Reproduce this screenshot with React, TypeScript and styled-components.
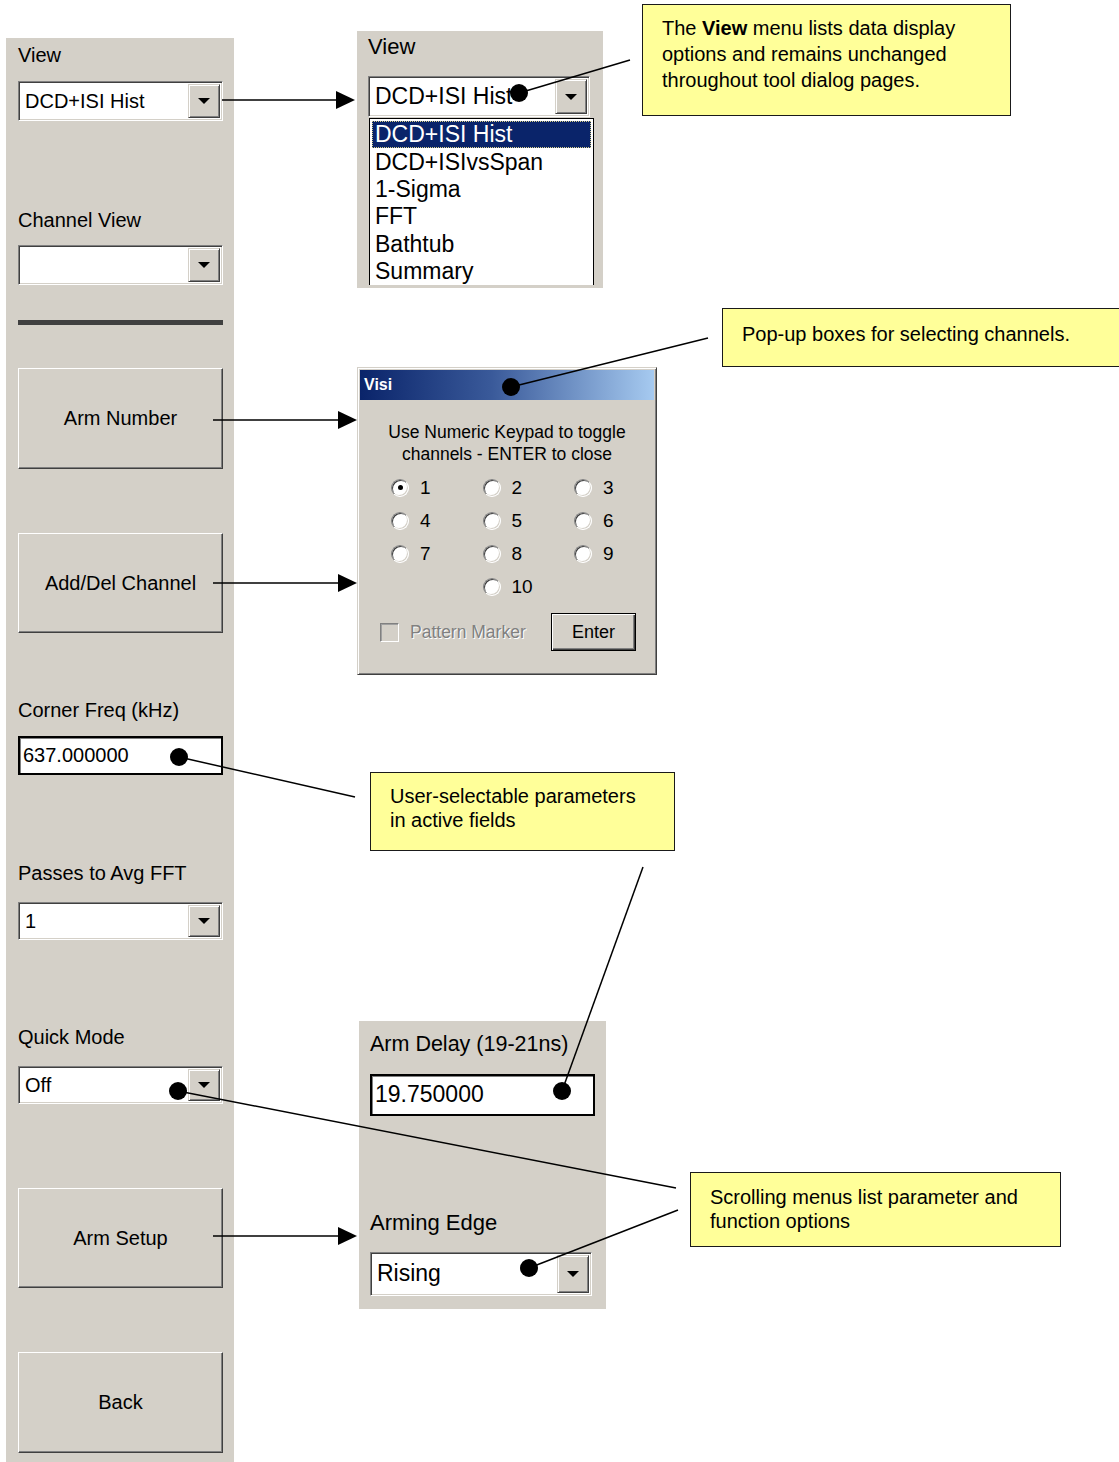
import React from "react";
import styled, { createGlobalStyle } from "styled-components";

const FACE = "#d4d0c8";

const GlobalStyle = createGlobalStyle`
  html, body { margin: 0; padding: 0; background: #ffffff; }
  body { font-family: "Liberation Sans", Arial, sans-serif; color: #000; }
`;

const Page = styled.div`
  position: relative;
  width: 1119px;
  height: 1462px;
  overflow: hidden;
  display: flex;
  align-items: flex-start;
  background: #ffffff;
`;

/* ---------- generic Win-classic parts ---------- */

const Label = styled.div<{ $mt: number; $size?: number }>`
  margin-top: ${(p) => p.$mt}px;
  font-size: ${(p) => p.$size ?? 20}px;
  line-height: ${(p) => (p.$size ?? 20) + 4}px;
  white-space: nowrap;
  color: #000;
`;

const Combo = styled.div<{ $mt: number; $h: number; $w?: number }>`
  margin-top: ${(p) => p.$mt}px;
  height: ${(p) => p.$h}px;
  width: ${(p) => (p.$w ? `${p.$w}px` : "auto")};
  box-sizing: border-box;
  display: flex;
  align-items: stretch;
  background: #ffffff;
  border: 1px solid;
  border-color: #808080 #ffffff #ffffff #808080;
  box-shadow: inset 1px 1px 0 #404040, inset -1px -1px 0 ${FACE};
  padding: 2px;
`;

const ComboValue = styled.span<{ $size: number }>`
  flex: 1;
  display: flex;
  align-items: center;
  padding-left: 4px;
  font-size: ${(p) => p.$size}px;
  white-space: nowrap;
  overflow: hidden;
`;

const DropButton = styled.span`
  width: 32px;
  flex-shrink: 0;
  box-sizing: border-box;
  background: ${FACE};
  border: 1px solid;
  border-color: ${FACE} #404040 #404040 ${FACE};
  box-shadow: inset 1px 1px 0 #ffffff, inset -1px -1px 0 #808080;
  display: flex;
  align-items: center;
  justify-content: center;
  &::after {
    content: "";
    border-left: 6px solid transparent;
    border-right: 6px solid transparent;
    border-top: 6px solid #000;
  }
`;

const TextField = styled.div<{ $mt: number; $h: number; $w?: number; $size: number }>`
  margin-top: ${(p) => p.$mt}px;
  height: ${(p) => p.$h}px;
  width: ${(p) => (p.$w ? `${p.$w}px` : "auto")};
  box-sizing: border-box;
  background: #ffffff;
  border: 2px solid #000;
  box-shadow: inset 1px 1px 0 #808080;
  display: flex;
  align-items: center;
  padding-left: 3px;
  font-size: ${(p) => p.$size}px;
  white-space: nowrap;
`;

const PanelButton = styled.div<{ $mt: number; $h: number }>`
  margin-top: ${(p) => p.$mt}px;
  height: ${(p) => p.$h}px;
  box-sizing: border-box;
  background: ${FACE};
  border: 1px solid;
  border-color: #ffffff #404040 #404040 #ffffff;
  box-shadow: inset -1px -1px 0 #808080;
  display: flex;
  align-items: center;
  justify-content: center;
  font-size: 20px;
  white-space: nowrap;
`;

const Separator = styled.div<{ $mt: number }>`
  margin-top: ${(p) => p.$mt}px;
  height: 5px;
  background: #404040;
`;

/* ---------- left tool panel ---------- */

const SidePanel = styled.aside`
  flex-shrink: 0;
  margin: 38px 0 0 6px;
  width: 228px;
  height: 1424px;
  box-sizing: border-box;
  padding: 0 11px 0 12px;
  background: ${FACE};
  display: flex;
  flex-direction: column;
`;

/* ---------- right canvas ---------- */

const Canvas = styled.div`
  flex: 1;
  display: flex;
  flex-direction: column;
`;

const Row = styled.div`
  display: flex;
  align-items: flex-start;
`;

const GreyPanel = styled.div<{ $ml: number; $mt: number; $w: number; $h: number }>`
  flex-shrink: 0;
  margin: ${(p) => p.$mt}px 0 0 ${(p) => p.$ml}px;
  width: ${(p) => p.$w}px;
  height: ${(p) => p.$h}px;
  box-sizing: border-box;
  padding-left: 11px;
  background: ${FACE};
  overflow: hidden;
  display: flex;
  flex-direction: column;
`;

const ListBox = styled.ul`
  margin: 1px 0 0 1px;
  padding: 2px 2px 0 2px;
  width: 225px;
  box-sizing: border-box;
  list-style: none;
  background: #ffffff;
  border: 1px solid #000;
  border-bottom: none;
`;

const ListItem = styled.li<{ $selected?: boolean }>`
  height: 27.4px;
  box-sizing: border-box;
  display: flex;
  align-items: center;
  padding-left: 3px;
  font-size: 23px;
  white-space: nowrap;
  color: ${(p) => (p.$selected ? "#ffffff" : "#000")};
  background: ${(p) => (p.$selected ? "#0a246a" : "transparent")};
  outline: ${(p) => (p.$selected ? "1px dotted #d8d08a" : "none")};
  outline-offset: -1px;
`;

const Callout = styled.div<{
  $ml: number;
  $mt: number;
  $w: number;
  $h: number;
  $pt: number;
  $pr?: number;
  $lh: number;
}>`
  flex-shrink: 0;
  margin: ${(p) => p.$mt}px 0 0 ${(p) => p.$ml}px;
  width: ${(p) => p.$w}px;
  height: ${(p) => p.$h}px;
  box-sizing: border-box;
  padding: ${(p) => p.$pt}px ${(p) => p.$pr ?? 12}px 0 19px;
  background: #ffff99;
  border: 1px solid #1a1a1a;
  font-size: 20px;
  line-height: ${(p) => p.$lh}px;
  color: #000;
`;

const Strong = styled.strong`
  font-weight: bold;
`;

/* ---------- Visi dialog ---------- */

const Dialog = styled.div`
  flex-shrink: 0;
  margin: 79px 0 0 123px;
  width: 300px;
  height: 308px;
  box-sizing: border-box;
  background: ${FACE};
  border: 1px solid;
  border-color: ${FACE} #404040 #404040 ${FACE};
  box-shadow: inset 1px 1px 0 #ffffff, inset -1px -1px 0 #808080;
  padding: 2px;
  display: flex;
  flex-direction: column;
`;

const TitleBar = styled.div`
  height: 30px;
  display: flex;
  align-items: center;
  padding-left: 4px;
  background: linear-gradient(to right, #0a246a 0%, #3a5a9a 45%, #a6caf0 100%);
  color: #ffffff;
  font-weight: bold;
  font-size: 16px;
`;

const DialogText = styled.div`
  margin-top: 21px;
  text-align: center;
  font-size: 17.5px;
  line-height: 22px;
`;

const RadioGrid = styled.div`
  margin-top: 6px;
  padding-left: 31px;
  display: grid;
  grid-template-columns: 91.5px 91.5px 91.5px;
  grid-auto-rows: 33px;
`;

const RadioOption = styled.label<{ $col?: number }>`
  grid-column: ${(p) => p.$col ?? "auto"};
  display: flex;
  align-items: center;
  gap: 11px;
  font-size: 19px;
`;

const RadioCircle = styled.span<{ $checked?: boolean }>`
  width: 18px;
  height: 18px;
  box-sizing: border-box;
  border-radius: 50%;
  background: #ffffff;
  border: 1px solid;
  border-color: #808080 #ffffff #ffffff #808080;
  box-shadow: inset 1px 1px 0 #404040, inset -1px -1px 0 ${FACE};
  display: flex;
  align-items: center;
  justify-content: center;
  &::after {
    content: "";
    width: 5px;
    height: 5px;
    border-radius: 50%;
    background: ${(p) => (p.$checked ? "#000" : "transparent")};
  }
`;

const DialogFooter = styled.div`
  margin-top: 10px;
  padding: 0 18px 0 20px;
  display: flex;
  align-items: center;
  justify-content: space-between;
`;

const CheckRow = styled.div`
  display: flex;
  align-items: center;
  gap: 11px;
  font-size: 17.5px;
  color: #808080;
  text-shadow: 1px 1px 0 #ffffff;
`;

const CheckBox = styled.span`
  width: 19px;
  height: 19px;
  box-sizing: border-box;
  background: ${FACE};
  border: 1px solid;
  border-color: #808080 #ffffff #ffffff #808080;
  box-shadow: inset 1px 1px 0 #a0a0a0;
`;

const DefaultButton = styled.div`
  width: 85px;
  height: 38px;
  box-sizing: border-box;
  border: 1px solid #000;
  background: ${FACE};
  box-shadow: inset 1px 1px 0 #ffffff, inset -1px -1px 0 #404040, inset -2px -2px 0 #808080;
  display: flex;
  align-items: center;
  justify-content: center;
  font-size: 18px;
`;

/* ---------- annotation overlay ---------- */

const Overlay = styled.svg`
  position: absolute;
  left: 0;
  top: 0;
  pointer-events: none;
`;

const arrows = [
  { x1: 222, x2: 355, y: 100 },
  { x1: 213, x2: 357, y: 420 },
  { x1: 213, x2: 357, y: 583 },
  { x1: 213, x2: 357, y: 1236 },
];

const pointers = [
  { cx: 519, cy: 93, x: 630, y: 60 },
  { cx: 511, cy: 387, x: 708, y: 338 },
  { cx: 179, cy: 757, x: 355, y: 797 },
  { cx: 562, cy: 1091, x: 643, y: 867 },
  { cx: 178, cy: 1091, x: 676, y: 1188 },
  { cx: 529, cy: 1268, x: 678, y: 1210 },
];

const viewItems = ["DCD+ISI Hist", "DCD+ISIvsSpan", "1-Sigma", "FFT", "Bathtub", "Summary"];

export default function App() {
  return (
    <>
      <GlobalStyle />
      <Page>
        <SidePanel>
          <Label $mt={5}>View</Label>
          <Combo $mt={14} $h={40}>
            <ComboValue $size={20}>DCD+ISI Hist</ComboValue>
            <DropButton />
          </Combo>
          <Label $mt={87}>Channel View</Label>
          <Combo $mt={13} $h={40}>
            <ComboValue $size={20} />
            <DropButton />
          </Combo>
          <Separator $mt={35} />
          <PanelButton $mt={43} $h={101}>Arm Number</PanelButton>
          <PanelButton $mt={64} $h={100}>Add/Del Channel</PanelButton>
          <Label $mt={65}>Corner Freq (kHz)</Label>
          <TextField $mt={14} $h={39} $size={20}>637.000000</TextField>
          <Label $mt={86}>Passes to Avg FFT</Label>
          <Combo $mt={17} $h={38}>
            <ComboValue $size={20}>1</ComboValue>
            <DropButton />
          </Combo>
          <Label $mt={85}>Quick Mode</Label>
          <Combo $mt={17} $h={38}>
            <ComboValue $size={20}>Off</ComboValue>
            <DropButton />
          </Combo>
          <PanelButton $mt={84} $h={100}>Arm Setup</PanelButton>
          <PanelButton $mt={64} $h={101}>Back</PanelButton>
        </SidePanel>

        <Canvas>
          <Row>
            <GreyPanel $ml={123} $mt={31} $w={246} $h={257}>
              <Label $mt={3} $size={22}>View</Label>
              <Combo $mt={16} $h={41} $w={222}>
                <ComboValue $size={23}>DCD+ISI Hist</ComboValue>
                <DropButton />
              </Combo>
              <ListBox>
                {viewItems.map((item, i) => (
                  <ListItem key={item} $selected={i === 0}>
                    {item}
                  </ListItem>
                ))}
              </ListBox>
            </GreyPanel>
            <Callout $ml={39} $mt={4} $w={369} $h={112} $pt={10} $lh={26}>
              The <Strong>View</Strong> menu lists data display options and remains
              unchanged throughout tool dialog pages.
            </Callout>
          </Row>

          <Row>
            <Dialog>
              <TitleBar>Visi</TitleBar>
              <DialogText>
                Use Numeric Keypad to toggle
                <br />
                channels - ENTER to close
              </DialogText>
              <RadioGrid>
                {[1, 2, 3, 4, 5, 6, 7, 8, 9].map((n) => (
                  <RadioOption key={n}>
                    <RadioCircle $checked={n === 1} />
                    {n}
                  </RadioOption>
                ))}
                <RadioOption $col={2}>
                  <RadioCircle />
                  10
                </RadioOption>
              </RadioGrid>
              <DialogFooter>
                <CheckRow>
                  <CheckBox />
                  Pattern Marker
                </CheckRow>
                <DefaultButton>Enter</DefaultButton>
              </DialogFooter>
            </Dialog>
            <Callout $ml={65} $mt={20} $w={420} $h={59} $pt={12} $lh={26}>
              Pop-up boxes for selecting channels.
            </Callout>
          </Row>

          <Row>
            <Callout $ml={136} $mt={97} $w={305} $h={79} $pt={11} $pr={30} $lh={24}>
              User-selectable parameters in active fields
            </Callout>
          </Row>

          <Row>
            <GreyPanel $ml={125} $mt={170} $w={247} $h={288}>
              <Label $mt={11} $size={21.5}>Arm Delay (19-21ns)</Label>
              <TextField $mt={16} $h={42} $w={225} $size={23}>19.750000</TextField>
              <Label $mt={94} $size={22}>Arming Edge</Label>
              <Combo $mt={16} $h={44} $w={222}>
                <ComboValue $size={23}>Rising</ComboValue>
                <DropButton />
              </Combo>
            </GreyPanel>
            <Callout $ml={84} $mt={321} $w={371} $h={75} $pt={12} $lh={24}>
              Scrolling menus list parameter and function options
            </Callout>
          </Row>
        </Canvas>

        <Overlay width={1119} height={1462} viewBox="0 0 1119 1462">
          {arrows.map((a) => (
            <g key={a.y}>
              <line x1={a.x1} y1={a.y} x2={a.x2 - 16} y2={a.y} stroke="#000" strokeWidth={1.5} />
              <polygon
                points={`${a.x2 - 19},${a.y - 9} ${a.x2},${a.y} ${a.x2 - 19},${a.y + 9}`}
                fill="#000"
              />
            </g>
          ))}
          {pointers.map((p) => (
            <g key={`${p.cx}-${p.cy}`}>
              <line x1={p.cx} y1={p.cy} x2={p.x} y2={p.y} stroke="#000" strokeWidth={1.5} />
              <circle cx={p.cx} cy={p.cy} r={9} fill="#000" />
            </g>
          ))}
        </Overlay>
      </Page>
    </>
  );
}
